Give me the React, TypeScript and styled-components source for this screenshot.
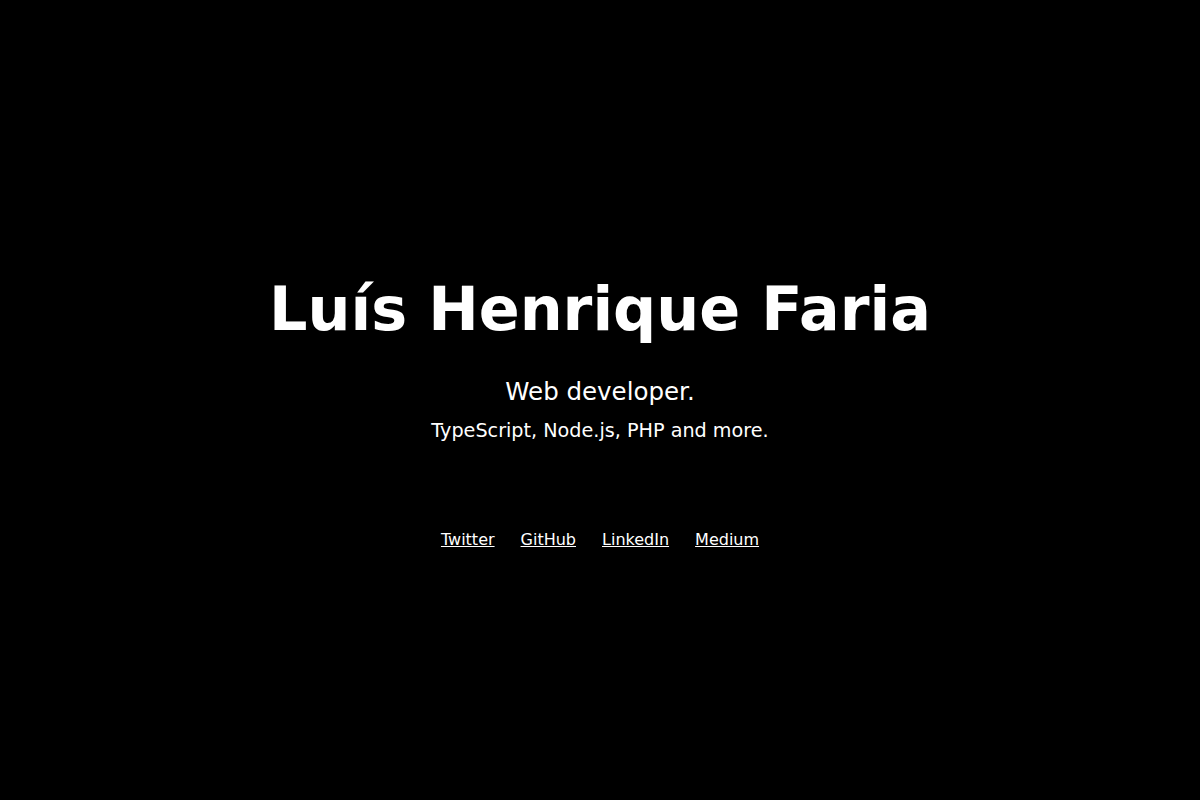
import React from "react";
import styled, { createGlobalStyle } from "styled-components";

const Global = createGlobalStyle`
  html, body { margin: 0; padding: 0; background: #000; }
  body { font-family: "DejaVu Sans", sans-serif; color: #fff; }
`;

const Page = styled.main`
  box-sizing: border-box;
  min-height: 100vh;
  padding-top: 22px;
  display: flex;
  flex-direction: column;
  align-items: center;
  justify-content: center;
  text-align: center;
`;

const Title = styled.h1`
  margin: 0;
  font-size: 60.4px;
  font-weight: bold;
  line-height: 72px;
`;

const Subtitle = styled.p`
  margin: 33px 0 0;
  font-size: 24.5px;
  line-height: 28.8px;
`;

const Stack = styled.p`
  margin: 12px 0 0;
  font-size: 19.2px;
  line-height: 23px;
`;

const Links = styled.nav`
  display: flex;
  gap: 26px;
  margin-top: 88px;
  line-height: 19.2px;
`;

const Link = styled.a`
  color: #fff;
  font-size: 16px;
  text-decoration: underline;
`;

export default function App() {
  return (
    <>
      <Global />
      <Page>
        <Title>Luís Henrique Faria</Title>
        <Subtitle>Web developer.</Subtitle>
        <Stack>TypeScript, Node.js, PHP and more.</Stack>
        <Links>
          <Link href="#">Twitter</Link>
          <Link href="#">GitHub</Link>
          <Link href="#">LinkedIn</Link>
          <Link href="#">Medium</Link>
        </Links>
      </Page>
    </>
  );
}
